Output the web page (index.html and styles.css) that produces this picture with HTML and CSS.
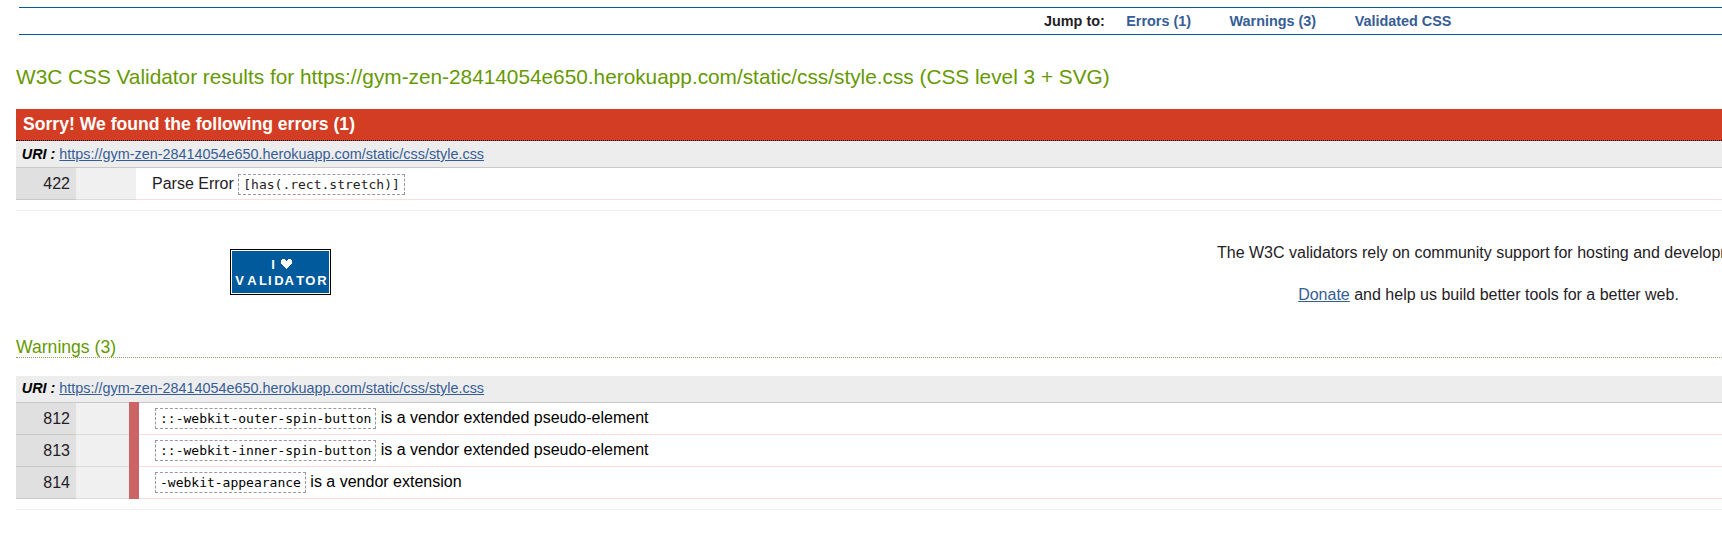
FILE: index.html
```html
<!DOCTYPE html>
<html lang="en">
<head>
<meta charset="utf-8">
<title>W3C CSS Validator results</title>
<link rel="stylesheet" href="styles.css">
</head>
<body>
<nav class="jump">
  <span class="jump-label">Jump to:</span>
  <a href="#errors">Errors (1)</a>
  <a href="#warnings">Warnings (3)</a>
  <a href="#css">Validated CSS</a>
</nav>
<main class="results">
  <h2 class="title">W3C CSS Validator results for https://gym-zen-28414054e650.herokuapp.com/static/css/style.css (CSS level 3 + SVG)</h2>
  <section id="errors">
    <h3 class="banner">Sorry! We found the following errors (1)</h3>
    <h4 class="uri">URI : <a href="#">https://gym-zen-28414054e650.herokuapp.com/static/css/style.css</a></h4>
    <div class="row">
      <div class="line">422</div><div class="context"></div>
      <div class="message error">Parse Error <code>[has(.rect.stretch)]</code></div>
    </div>
    <div class="end"></div>
  </section>
  <section class="donate">
    <svg class="badge" width="101" height="46" viewBox="0 0 101 46">
      <rect width="101" height="46" fill="#000"/>
      <rect x="1" y="1" width="99" height="44" fill="#fff"/>
      <rect x="2" y="2" width="97" height="42" fill="#005a9c"/>
      <g class="badge-text">
        <text x="43" y="20">I</text>
        <text y="36" x="9.5 22 33 39.8 49 59.3 70.2 80.3 92">VALIDATOR</text>
      </g>
      <path shape-rendering="crispEdges" fill="#fff" d="M52 10h3v1h1v1h1v-1h1v-1h3v1h1v4h-1v1h-1v1h-1v1h-1v1h-1v1h-1v-1h-1v-1h-1v-1h-1v-1h-1v-1h-1v-4h1z"/>
    </svg>
    <div class="support">
      <p>The W3C validators rely on community support for hosting and development.</p>
      <p><a href="#">Donate</a> and help us build better tools for a better web.</p>
    </div>
  </section>
  <section id="warnings">
    <h3 class="heading">Warnings (3)</h3>
    <h4 class="uri raised">URI : <a href="#">https://gym-zen-28414054e650.herokuapp.com/static/css/style.css</a></h4>
    <div class="rows">
      <div class="row">
        <div class="line">812</div><div class="context"></div>
        <div class="message"><code>::-webkit-outer-spin-button</code> is a vendor extended pseudo-element</div>
      </div>
      <div class="row">
        <div class="line">813</div><div class="context"></div>
        <div class="message"><code>::-webkit-inner-spin-button</code> is a vendor extended pseudo-element</div>
      </div>
      <div class="row">
        <div class="line">814</div><div class="context"></div>
        <div class="message"><code>-webkit-appearance</code> is a vendor extension</div>
      </div>
      <div class="level"></div>
    </div>
    <div class="end"></div>
  </section>
</main>
</body>
</html>
```
FILE: styles.css
```css
* { box-sizing: border-box; }
html { background: #fff; overflow: hidden; }
body {
  margin: 0;
  padding-top: 7px;
  background: #fff;
  color: #1f2126;
  font: 16px/20px "Liberation Sans", Arial, sans-serif;
  overflow: hidden;
}
a { color: #365d95; }
h2, h3, h4, p { margin: 0; font-weight: normal; }
.jump {
  display: flex;
  height: 28px;
  margin-left: 19px;
  padding-left: 1025px;
  border-top: 1px solid #005a9c;
  border-bottom: 1px solid #005a9c;
  font-size: 14.4px;
  line-height: 26px;
  font-weight: bold;
  white-space: nowrap;
}
.jump a { text-decoration: none; margin-right: 38.5px; }
.jump-label { margin-right: 21.5px; }
.results { margin-left: 16px; }
.title {
  height: 74px;
  padding-top: 29px;
  color: #690;
  font-size: 20.8px;
  line-height: 26px;
  white-space: nowrap;
}
.banner {
  height: 32px;
  padding-left: 7px;
  background: #d23d24;
  border-bottom: 1px dotted #000;
  color: #fff;
  font-size: 17.6px;
  line-height: 30px;
  font-weight: bold;
}
.uri {
  height: 27px;
  padding-left: 5.76px;
  background: #ededed;
  border-bottom: 1px solid #c8c8c8;
  color: #000;
  font-size: 14.4px;
  line-height: 26px;
  font-weight: bold;
  font-style: italic;
}
.uri.raised { line-height: 24px; }
.uri a { font-weight: normal; font-style: normal; }
.row { display: flex; height: 32px; line-height: 32px; }
.line {
  width: 60px;
  padding-right: 6px;
  background: #e0e0e0;
  border-bottom: 1px solid #c8c8c8;
  text-align: right;
}
.context { width: 60px; background: #f0f0f0; border-bottom: 1px solid #dcdcdc; }
.message {
  flex: 1;
  padding-left: 19px;
  border-bottom: 1px solid #fdd;
  color: #000;
  line-height: 30px;
  white-space: nowrap;
}
.message.error { padding-left: 16px; color: #1f2126; line-height: 32px; }
code {
  padding: 2px 4px;
  border: 1px dashed #999;
  font: 13px "DejaVu Sans Mono", monospace;
}
.end { height: 11px; border-bottom: 1px solid #eef; }
.donate { display: flex; height: 124px; padding: 38px 0 0 214px; }
.badge { flex: none; }
.badge-text {
  fill: #fff;
  font: bold 13px "Liberation Sans", Arial, sans-serif;
  text-anchor: middle;
}
.support {
  flex: none;
  width: 543px;
  margin: -6px 0 0 886px;
  text-align: center;
  white-space: nowrap;
}
.support p { line-height: 20px; margin-bottom: 22px; }
.heading {
  height: 23px;
  margin-bottom: 18px;
  border-bottom: 1px dotted #996;
  color: #690;
  font-size: 17.6px;
  line-height: 24px;
}
.rows { position: relative; }
/* severity stripe running over the borders of every warning row */
.level {
  position: absolute;
  left: 113px;
  top: -1px;
  bottom: 0;
  width: 10px;
  background: #cc6466;
}
```
